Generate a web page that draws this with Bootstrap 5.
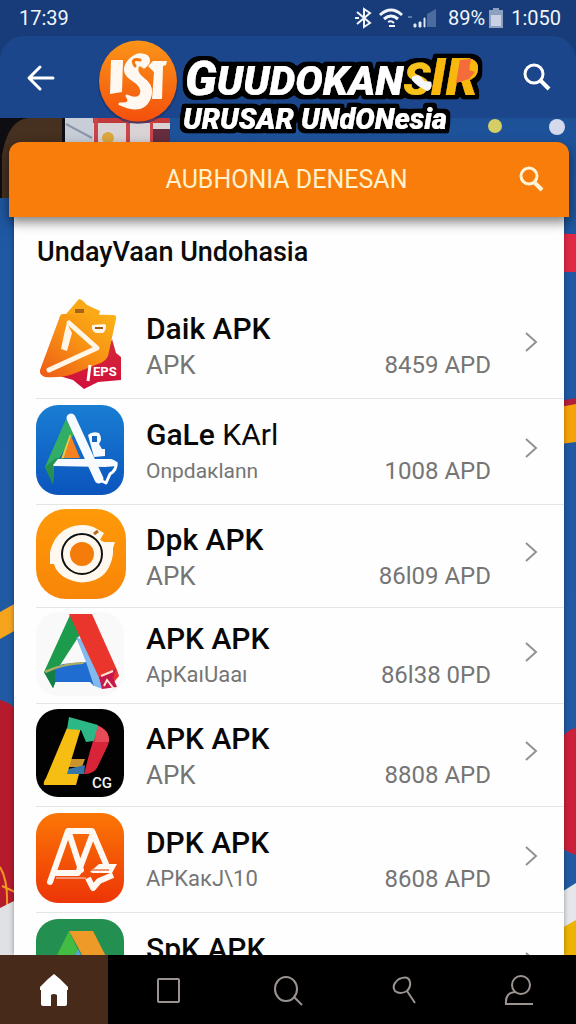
<!DOCTYPE html>
<html lang="id">
<head>
<meta charset="utf-8">
<meta name="viewport" content="width=device-width, initial-scale=1">
<title>Guudokansir</title>
<link href="https://cdn.jsdelivr.net/npm/bootstrap@5.3.0/dist/css/bootstrap.min.css" rel="stylesheet">
<style>
  body { font-family: Roboto, "Liberation Sans", sans-serif; background: #1f5aa3; }
  .app-shell { isolation: isolate; }
  .backdrop { z-index: -1; }
  .status-strip { height: 36px; padding: 0 15px 0 19px; background: #173c79; color: #f1f5fb; font-size: 20px; line-height: 36px; }
  .top-wrap { background: #173c79; }
  .top-bar { height: 82px; padding: 0 24px 0 22px; background: #1b468b; border-radius: 24px 24px 0 0; }
  .icon-btn { background: none; border: 0; padding: 0; line-height: 0; }
  .brand-mark { width: 80px; height: 84px; margin-top: 10px; }
  .brand-word { width: 312px; height: 98px; margin-top: 20px; }
  .brand-word text { font-family: Roboto, sans-serif; font-weight: 900; font-style: italic; fill: #fff; }
  .banner { margin: 24px 7px 0 9px; height: 75px; padding: 0 24px 0 0; background: #f97d0b; border-radius: 12px 12px 0 0; color: #fff1cd; box-shadow: 0 5px 12px rgba(0,0,0,.5); z-index: 2; }
  .banner-title { font-size: 25px; line-height: 32px; padding-left: 46px; font-weight: 400; }
  .sheet { margin: 0 12px 0 14px; background: #fefefe; min-height: 0; box-shadow: 0 0 5px rgba(0,0,0,.35); }
  .sheet-title { font-size: 27px; line-height: 34px; font-weight: 500; color: #0b0b0b; padding: 18px 23px 24px; }
  .app-row { margin-left: 22px; padding-right: 26px; color: #757575; text-decoration: none; border-bottom: 1px solid #e4e4e4; height: 103px; }
  .row-tall { height: 106px; }
  .row-short { height: 96px; }
  .app-icon { width: 90px; height: 90px; margin-bottom: 4px; flex: none; }
  .app-info { margin: 3px 34px 0 20px; line-height: 36px; }
  .app-name { font-size: 30px; font-weight: 500; color: #080808; }
  .app-sub { font-size: 26px; }
  .app-sub-md { font-size: 22px; }
  .app-sub-sm { font-size: 21px; }
  .app-size { font-size: 24px; }
  .chev { width: 13px; height: 20px; margin-bottom: 8px; flex: none; }
  .tab-bar { display: grid; grid-template-columns: 19fr 21fr 21fr 20fr 20fr; height: 69px; background: #000; z-index: 3; }
  .tab-bar a.current { background: #482a1b; }
</style>
<script src="https://cdn.jsdelivr.net/npm/bootstrap@5.3.0/dist/js/bootstrap.bundle.min.js"></script>
</head>
<body>
<div class="app-shell position-relative vh-100 d-flex flex-column overflow-hidden">

  <svg class="backdrop position-absolute top-0 start-0 w-100 h-100" viewBox="0 0 576 1024" preserveAspectRatio="none" aria-hidden="true">
    <defs><linearGradient id="sky" x2="0" y2="1"><stop offset="0" stop-color="#1c4a8f"/><stop offset=".25" stop-color="#1f59a3"/><stop offset="1" stop-color="#215ba3"/></linearGradient></defs>
    <rect width="576" height="1024" fill="url(#sky)"/>
    <rect y="118" width="65" height="80" fill="#0d0d12"/>
    <path d="M2 198V155Q8 120 28 118H62V198Z" fill="#46301f"/>
    <rect x="65" y="118" width="28" height="26" fill="#c7ced8"/>
    <path d="M66 124L92 138" stroke="#8b96a8" stroke-width="2"/>
    <rect x="93" y="118" width="77" height="26" fill="#d9d3d6"/>
    <path d="M93 118H170V123H93Z" fill="#c23a3a"/>
    <path d="M94 118H98V144H94ZM126 118H130V144H126ZM150 118H153V144H150Z" fill="#c9454a"/>
    <rect x="153" y="129" width="17" height="15" fill="#652d3d"/>
    <circle cx="108" cy="138" r="6" fill="#dca83c"/>
    <circle cx="495" cy="126" r="7" fill="#d5ce64"/>
    <circle cx="557" cy="127" r="8" fill="#d5d9ec"/>
    <path d="M576 234Q566 234 560 233V272H576Z" fill="#de2845"/>
    <path d="M560 401L576 398V408H560Z" fill="#b21f3c"/>
    <path d="M560 407L576 404V442L560 444Z" fill="#f5a20a"/>
    <path d="M560 740Q566 730 576 728V855Q566 852 560 846Z" fill="#cb2039"/>
    <path d="M560 893L576 883V924L560 932Z" fill="#e4e6e9"/>
    <path d="M560 929L576 920V960H560Z" fill="#edb304"/>
    <path d="M0 612L16 603V630L0 639Z" fill="#f4a51d"/>
    <path d="M0 700Q10 702 16 710V900L0 912Z" fill="#b51b2d"/>
    <path d="M0 867Q8 880 7 906M2 886L15 892" fill="none" stroke="#f29a20" stroke-width="2"/>
    <path d="M0 908L16 900V960H0Z" fill="#dfe1e4"/>
  </svg>

  <div class="status-strip flex-shrink-0 d-flex justify-content-between">
    <span>17:39</span>
    <div class="d-flex align-items-center">
      <svg class="me-1" width="20" height="22" viewBox="0 0 20 22" fill="none" stroke="#f1f5fb" stroke-width="2" aria-label="Bluetooth"><path d="M3 5L16 16L10 20V2L16 6L3 17M1 11H5"/></svg>
      <svg class="me-1" width="26" height="20" viewBox="0 0 26 20" fill="none" stroke="#f1f5fb" stroke-width="3" aria-label="Wi-Fi"><path d="M2 7Q13 -3 24 7M6 11Q13 5 20 11" /><path d="M10 14Q13 12 16 15M11 18H17" stroke-width="2"/></svg>
      <svg class="me-2" width="28" height="20" viewBox="0 0 28 20" aria-label="Sinyal"><path d="M19 6L28 1V19H19Z" fill="#4c6b9f"/><path d="M0 9H4" stroke="#9fb3d4"/><path d="M6 19V16H8V19ZM11 19V14H13V19ZM16 19V10H17V19Z" stroke="#cfdcf0" fill="#fff" stroke-width="1"/></svg>
      <span class="ms-1">89%</span>
      <svg class="ms-1 me-2" width="14" height="20" viewBox="0 0 14 20" aria-label="Baterai"><path d="M4 0H10V2H14V20H0V2H4Z" fill="#8ea0c0"/><path d="M2 7H12V18H2Z" fill="#c8d2e4"/></svg>
      <span>1:050</span>
    </div>
  </div>

  <div class="top-wrap flex-shrink-0">
    <header class="top-bar d-flex align-items-center justify-content-between">
      <button class="icon-btn" aria-label="Kembali"><svg width="40" height="30" viewBox="0 0 40 30" fill="none" stroke="#fff" stroke-width="3" stroke-linecap="round" stroke-linejoin="round"><path d="M31 16H8M18 5L7 16L18 27"/></svg></button>
      <div class="d-flex align-items-center z-1 ms-1">
        <svg class="brand-mark" viewBox="0 0 80 84" aria-hidden="true">
          <defs><linearGradient id="disc" x2="0" y2="1"><stop offset="0" stop-color="#fb9418"/><stop offset="1" stop-color="#f4500c"/></linearGradient></defs>
          <ellipse cx="40" cy="43" rx="40" ry="41" fill="#12316a" opacity=".6"/>
          <ellipse cx="40" cy="41" rx="39" ry="40.5" fill="url(#disc)"/>
          <path d="M13 20H25L24 52L12 54Z" fill="#fff8f0"/>
          <path d="M55 21L69 21L68 25L65 26L64 59H54L56 32L50 26Z" fill="#fff8f0"/>
          <path d="M46 27Q54 21 48 16Q40 12 32 20Q22 31 34 39Q47 47 43 55Q39 61 29 56Q35 65 22 64Q44 74 51 59Q56 47 45 39Q35 31 41 24Z" fill="#fff8f0" stroke="#fff8f0" stroke-width="3" stroke-linejoin="round"/>
          <path d="M37 26Q32 18 42 20" fill="none" stroke="#f5780f" stroke-width="3" stroke-linecap="round"/>
        </svg>
        <svg class="brand-word" viewBox="0 0 312 98" role="img" aria-label="Guudokansir Urusar Undonesia">
          <defs><filter id="outline" x="-5%" y="-10%" width="110%" height="120%"><feMorphology in="SourceAlpha" operator="dilate" radius="4" result="fat"/><feGaussianBlur in="fat" stdDeviation="1" result="soft"/><feComponentTransfer in="soft" result="edge"><feFuncA type="linear" slope="4" intercept="-1"/></feComponentTransfer><feMerge><feMergeNode in="edge"/><feMergeNode in="SourceGraphic"/></feMerge></filter></defs>
          <g filter="url(#outline)">
            <text x="7" y="57" font-size="48">G<tspan font-size="41">UUDOKAN</tspan><tspan font-size="45" fill="#f8c21b">S</tspan><tspan font-size="52" fill="#f8b80e">IR</tspan></text>
            <path d="M234 39Q241 34 246 43L253 44Q255 51 249 53Q239 48 234 42Z" fill="#f5f7fb"/>
            <path d="M282 22L293 21L291 32L297 34L291 41L278 45Z" fill="#f46c3b"/>
            <text x="5" y="91" font-size="29">URUSAR UNdONesia</text>
          </g>
        </svg>
      </div>
      <button class="icon-btn" aria-label="Cari"><svg width="30" height="30" viewBox="0 0 30 30" fill="none" stroke="#fff" stroke-width="3"><circle cx="12" cy="12" r="9"/><path d="M18 18L27 27" stroke-width="4"/></svg></button>
    </header>
  </div>

  <div class="banner position-relative flex-shrink-0 d-flex align-items-center">
    <h1 class="banner-title flex-grow-1 text-center mb-0">AUBHONIA DENESAN</h1>
    <button class="icon-btn" aria-label="Cari aplikasi"><svg width="27" height="27" viewBox="0 0 27 27" fill="none" stroke="#fff3d6" stroke-width="3"><ellipse cx="11" cy="10" rx="8" ry="8"/><path d="M16 16L24 24" stroke-width="4"/></svg></button>
  </div>

  <main class="sheet flex-grow-1 overflow-hidden">
    <h2 class="sheet-title mb-0">UndayVaan Undohasia</h2>
    <nav aria-label="Aplikasi">
      <a href="#" class="app-row row-tall d-flex align-items-center">
        <svg class="app-icon" viewBox="0 0 90 90" aria-hidden="true">
          <defs><linearGradient id="gold" x1="1" x2="0" y2="1"><stop offset="0" stop-color="#fbb417"/><stop offset=".5" stop-color="#f88f14"/><stop offset="1" stop-color="#ec5a17"/></linearGradient><linearGradient id="rose" x2="0" y2="1"><stop offset="0" stop-color="#d52b38"/><stop offset="1" stop-color="#d10f3c"/></linearGradient></defs>
          <path d="M30 15L43 0Q46 0 51 6L64 12L62 20H28Z" fill="#fba917"/><rect x="39" y="10" width="9" height="4" fill="#a56315"/>
          <path d="M76 40L80 54L85 58V81L62 83L48 90L37 81L20 76L70 55Z" fill="url(#rose)"/>
          <path d="M27 15L77 16Q81 16 80 20L72 57Q69 63 62 65L37 75Q26 79 9 78Q3 76 4 71L23 20Q24 15 27 15Z" fill="url(#gold)"/>
          <path d="M33 24L61 49L13 71" fill="none" stroke="#fff6e7" stroke-width="5" stroke-linecap="round" stroke-linejoin="round"/><path d="M31 24L36 34L31 52L25 50L29 31Z" fill="#fff6e7"/>
          <path d="M56 26L69 25Q72 29 67 34H60Q55 32 56 26Z" fill="#fff6e7"/><path d="M59 29H67" stroke="#9c5a19" stroke-width="2"/>
          <path d="M54 66L52 82" stroke="#fff" stroke-width="3"/><text x="57" y="77" font-size="13" font-weight="700" fill="#fff">EPS</text>
        </svg>
        <div class="app-info flex-grow-1"><div class="app-name">Daik APK</div><div class="d-flex justify-content-between"><span class="app-sub">APK</span><span class="app-size">8459 APD</span></div></div>
        <svg class="chev" viewBox="0 0 13 20" fill="none" stroke="#929292" stroke-width="2"><path d="M1 1L11 10L1 19"/></svg>
      </a>
      <a href="#" class="app-row row-tall d-flex align-items-center">
        <svg class="app-icon" viewBox="0 0 90 90" aria-hidden="true">
          <defs><linearGradient id="azure" x2="0" y2="1"><stop offset="0" stop-color="#197ed3"/><stop offset="1" stop-color="#0b54bd"/></linearGradient></defs>
          <rect width="88" height="90" rx="22" fill="url(#azure)"/>
          <path d="M30 14L9 62L17 79L18 62L38 29Z" fill="#32ad66"/><path d="M35 31L28 53H44Z" fill="#f58120"/><path d="M35 31L28 53L25 54L34 29Z" fill="#f6c438"/>
          <path d="M9 62L20 53L38 54V60H18L17 79Z" fill="#269051"/><path d="M17 60L22 54H75Q83 56 81 61L69 62L18 61Z" fill="#f7fbff"/>
          <path d="M52 30Q56 26 63 28Q67 34 63 39L66 44H69V51L58 52Z" fill="#f7fbff"/><rect x="56" y="31" width="5" height="6" fill="#1664bd"/>
          <path d="M35 13L63 74" stroke="#f7fbff" stroke-width="9" stroke-linecap="round"/>
          <path d="M80 57Q81 65 74 69L70 78L64 75" stroke="#fff" stroke-width="3" fill="none" stroke-linejoin="round"/>
        </svg>
        <div class="app-info flex-grow-1"><div class="app-name">GaLe <span class="fw-normal">KArl</span></div><div class="d-flex justify-content-between"><span class="app-sub-sm">Onpdaкlann</span><span class="app-size">1008 APD</span></div></div>
        <svg class="chev" viewBox="0 0 13 20" fill="none" stroke="#929292" stroke-width="2"><path d="M1 1L11 10L1 19"/></svg>
      </a>
      <a href="#" class="app-row d-flex align-items-center">
        <svg class="app-icon" viewBox="0 0 90 90" aria-hidden="true">
          <defs><linearGradient id="amber" x2="0" y2="1"><stop offset="0" stop-color="#ff9a09"/><stop offset="1" stop-color="#f88508"/></linearGradient></defs>
          <rect width="90" height="90" rx="30" fill="url(#amber)"/>
          <path d="M14 55V43Q19 22 38 17Q52 14 61 20L68 24L64 31L68 33H79L77 39L77 45Q74 65 59 71Q43 77 28 68Q20 63 18 55Z" fill="#fff8ee"/>
          <circle cx="46" cy="45" r="20" fill="none" stroke="#111" stroke-width="2"/><circle cx="46" cy="45" r="12" fill="#f57c0b"/><path d="M58 25L62 22" stroke="#b36b19" stroke-width="3"/>
        </svg>
        <div class="app-info flex-grow-1"><div class="app-name">Dpk APK</div><div class="d-flex justify-content-between"><span class="app-sub">APK</span><span class="app-size">86l09 APD</span></div></div>
        <svg class="chev" viewBox="0 0 13 20" fill="none" stroke="#929292" stroke-width="2"><path d="M1 1L11 10L1 19"/></svg>
      </a>
      <a href="#" class="app-row row-short d-flex align-items-center">
        <svg class="app-icon" viewBox="0 0 90 90" aria-hidden="true">
          <rect y="3" width="88" height="84" rx="22" fill="#f9f9f9"/>
          <path d="M34 6L53 7L43 27L19 64L20 72L17 79L8 63Z" fill="#1c9b4c"/>
          <path d="M17 79L19 58L27 55L51 53L58 56V77L54 73H19Z" fill="#206dd1"/><path d="M8 63L19 59V73L17 79Z" fill="#128044"/>
          <path d="M40 28L49 32L66 66L67 80L58 77L50 53Z" fill="#82b9ee"/><path d="M33 5H56L81 61L83 67L78 73L68 79Z" fill="#e9352c"/>
          <path d="M8 62Q28 53 49 53L47 55Q26 56 10 64Z" fill="#afad64"/>
          <path d="M63 68L80 60L77 69L81 78L66 80Z" fill="#c5184e"/><path d="M65 67L77 62M68 77L71 71L78 80" fill="none" stroke="#ffe7cf" stroke-width="2"/>
        </svg>
        <div class="app-info flex-grow-1"><div class="app-name">APK APK</div><div class="d-flex justify-content-between"><span class="app-sub-md">ApKaıUaaı</span><span class="app-size">86l38 0PD</span></div></div>
        <svg class="chev" viewBox="0 0 13 20" fill="none" stroke="#929292" stroke-width="2"><path d="M1 1L11 10L1 19"/></svg>
      </a>
      <a href="#" class="app-row d-flex align-items-center">
        <svg class="app-icon" viewBox="0 0 90 90" aria-hidden="true">
          <rect y="1" width="88" height="88" rx="22" fill="#020202"/>
          <path d="M60 17Q76 22 72 37L61 60Q57 66 48 66L54 43L58 30Z" fill="#d82439"/><path d="M60 17Q74 22 73 34L59 34Z" fill="#e64b57"/>
          <path d="M34 51H49L46 59H31Z" fill="#c9942b"/><path d="M32 61L49 57L48 66H29Z" fill="#3676aa"/>
          <path d="M31 20L45 20L31 66L43 66L40 77H8Q7 74 10 70Z" fill="#f6bd12"/><path d="M33 9L62 17L58 33L50 34L45 22L31 21Z" fill="#2bb786"/>
          <text x="56" y="80" font-size="15" font-weight="500" fill="#f4f4f4">CG</text>
        </svg>
        <div class="app-info flex-grow-1"><div class="app-name">APK APK</div><div class="d-flex justify-content-between"><span class="app-sub">APK</span><span class="app-size">8808 APD</span></div></div>
        <svg class="chev" viewBox="0 0 13 20" fill="none" stroke="#929292" stroke-width="2"><path d="M1 1L11 10L1 19"/></svg>
      </a>
      <a href="#" class="app-row row-tall d-flex align-items-center">
        <svg class="app-icon" viewBox="0 0 90 90" aria-hidden="true">
          <defs><linearGradient id="fire" x2="0" y2="1"><stop offset="0" stop-color="#fb7705"/><stop offset="1" stop-color="#ed3507"/></linearGradient></defs>
          <rect width="88" height="90" rx="22" fill="url(#fire)"/>
          <path d="M14 69L32 18H56L70 51M20 60H42L57 20M33 20L45 57" fill="none" stroke="#fff8f3" stroke-width="6" stroke-linecap="round" stroke-linejoin="round"/>
          <path d="M54 59L63 51H81L76 60L57 60" fill="#fff8f3"/><path d="M52 65L57 75L63 68L77 62" fill="none" stroke="#fff8f3" stroke-width="6" stroke-linejoin="round"/><path d="M56 57L73 57M50 65H20" stroke="#ee9271" stroke-width="2"/>
        </svg>
        <div class="app-info flex-grow-1"><div class="app-name">DPK APK</div><div class="d-flex justify-content-between"><span class="app-sub-md">APKaкJ\10</span><span class="app-size">8608 APD</span></div></div>
        <svg class="chev" viewBox="0 0 13 20" fill="none" stroke="#929292" stroke-width="2"><path d="M1 1L11 10L1 19"/></svg>
      </a>
      <a href="#" class="app-row row-tall d-flex align-items-center">
        <svg class="app-icon" viewBox="0 0 90 90" aria-hidden="true">
          <rect width="88" height="90" rx="22" fill="#239051"/><path d="M33 12L8 62L18 75L42 31Z" fill="#42bc43"/><path d="M33 12H57L82 61L68 76Z" fill="#ee9a28"/><path d="M42 30L61 68H24Z" fill="#55a6d7"/>
        </svg>
        <div class="app-info flex-grow-1"><div class="app-name">SpK APK</div><div class="d-flex justify-content-between"><span class="app-sub">APK</span><span class="app-size">8608 APD</span></div></div>
        <svg class="chev" viewBox="0 0 13 20" fill="none" stroke="#929292" stroke-width="2"><path d="M1 1L11 10L1 19"/></svg>
      </a>
    </nav>
  </main>

  <nav class="tab-bar flex-shrink-0" aria-label="Navigasi utama">
    <a href="#" class="current d-flex align-items-center justify-content-center" aria-label="Beranda" aria-current="page"><svg width="32" height="34" viewBox="0 0 32 34"><path d="M16 1L22 6L30 14V17H29V31Q29 33 27 33H19V22Q16 20 13 22V33H5Q3 33 3 31V17H2V14L10 6Z" fill="#fff"/></svg></a>
    <a href="#" class="d-flex align-items-center justify-content-center" aria-label="Aplikasi"><svg width="26" height="26" viewBox="0 0 26 26" fill="none" stroke="#9b9390" stroke-width="2"><rect x="3" y="2" width="21" height="23" rx="1"/></svg></a>
    <a href="#" class="d-flex align-items-center justify-content-center" aria-label="Cari"><svg width="32" height="32" viewBox="0 0 32 32" fill="none" stroke="#9b9390" stroke-width="2"><ellipse cx="14" cy="15" rx="11" ry="12"/><path d="M22 23L30 31"/></svg></a>
    <a href="#" class="d-flex align-items-center justify-content-center" aria-label="Jelajah"><svg width="28" height="30" viewBox="0 0 28 30" fill="none" stroke="#9b9390" stroke-width="2"><path d="M16 16Q9 20 4 16Q0 10 8 4Q18 0 19 7Q20 12 16 16L24 28"/></svg></a>
    <a href="#" class="d-flex align-items-center justify-content-center" aria-label="Profil"><svg width="30" height="32" viewBox="0 0 30 32" fill="none" stroke="#9b9390" stroke-width="2"><ellipse cx="17" cy="11" rx="9" ry="9"/><path d="M12 18Q1 18 2 30H29"/></svg></a>
  </nav>
</div>
</body>
</html>
